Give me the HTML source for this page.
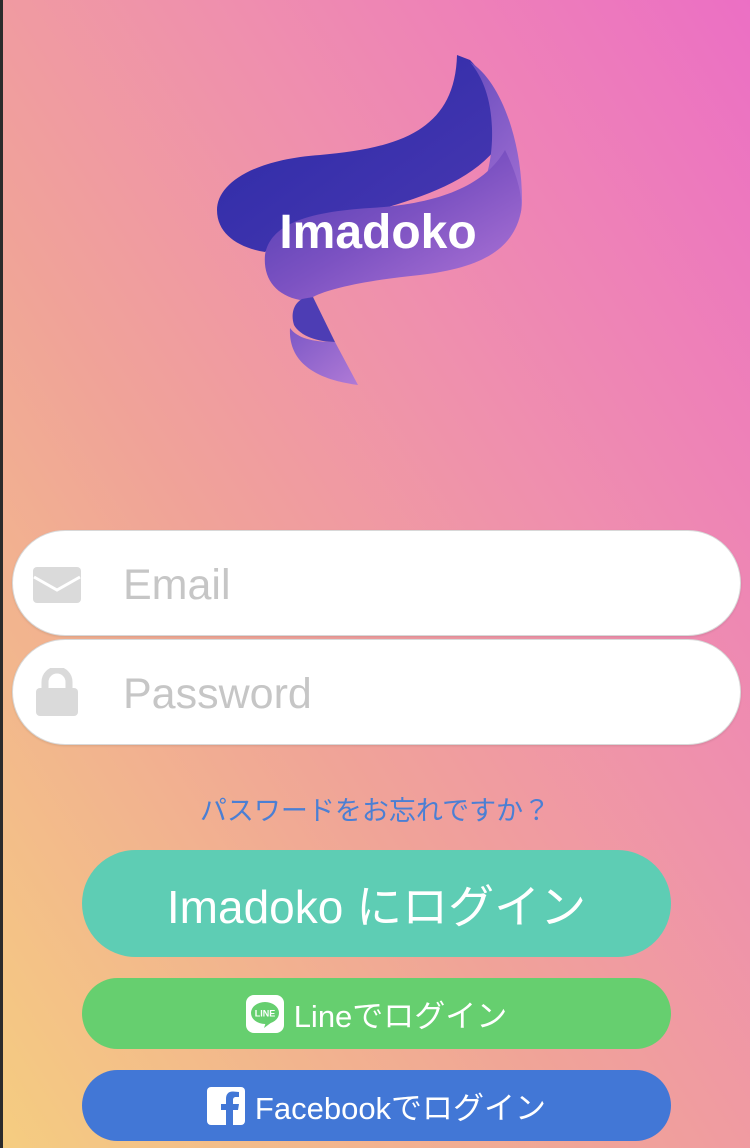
<!DOCTYPE html>
<html><head><meta charset="utf-8"><style>
html,body{margin:0;padding:0}
body{width:750px;height:1148px;overflow:hidden;position:relative;
background:linear-gradient(to top right,#f5cd80 0%,#f0a398 40%,#ef8fae 65%,#ec6fc4 100%);
font-family:"Liberation Sans","Noto Sans CJK JP",sans-serif}
.strip{position:absolute;left:0;top:0;width:3px;height:1148px;background:#2b2b2b}
.field{position:absolute;left:12px;width:727px;height:104px;background:#fff;border:1px solid #d8d8d8;border-radius:53px;box-shadow:0 1px 2px rgba(0,0,0,.1)}
.ph{position:absolute;left:110px;top:0;line-height:108px;font-size:43px;color:#c6c6c6}
.btn{position:absolute;left:82px;width:589px;color:#fff;text-align:center;display:flex;align-items:center;justify-content:center}
</style></head><body>
<div class="strip"></div>
<svg style="position:absolute;left:0;top:0" width="750" height="420">
<defs>
<linearGradient id="g1" x1="0" y1="0" x2="1" y2="1"><stop offset="0" stop-color="#2a2aa6"/><stop offset="1" stop-color="#4a38b2"/></linearGradient>
<linearGradient id="g2" x1="0" y1="0" x2="1" y2="1"><stop offset="0" stop-color="#4a3ab0"/><stop offset=".5" stop-color="#7c52c2"/><stop offset="1" stop-color="#b478d8"/></linearGradient>
<linearGradient id="g4" x1="0" y1="0" x2="1" y2="1"><stop offset="0" stop-color="#7c58c6"/><stop offset="1" stop-color="#b07ad6"/></linearGradient>
<linearGradient id="g5" x1="0" y1="0" x2="0.6" y2="1"><stop offset="0" stop-color="#5a44b8"/><stop offset="1" stop-color="#a470d4"/></linearGradient>
</defs>
<path d="M457 55 C455 130 400 148 320 155 C250 160 217 185 217 210 C217 235 240 248 265 252 C300 215 440 215 495 150 C500 110 490 80 470 60 Z" fill="url(#g1)"/>
<path d="M470 62 C500 80 522 140 522 200 C522 240 490 262 440 268 L420 250 C470 220 490 190 492 140 C493 105 485 80 470 62 Z" fill="url(#g5)"/>
<path d="M265 255 C270 225 305 212 370 208 C440 204 485 185 505 150 C520 180 524 205 520 215 C512 250 480 268 420 275 C370 280 330 288 313 297 L300 300 C275 295 263 278 265 255 Z" fill="url(#g2)"/>
<path d="M302 299 L313 297 L335 342 C318 342 300 336 294 325 C290 312 295 303 302 299 Z" fill="#4d3db4"/>
<path d="M290 328 C288 365 320 380 358 385 L335 342 C312 342 297 338 290 328 Z" fill="url(#g4)"/>
<text x="378" y="248" text-anchor="middle" font-family="Liberation Sans,sans-serif" font-weight="bold" font-size="48" fill="#fff">Imadoko</text>
</svg>
<div class="field" style="top:530px">
<svg style="position:absolute;left:20px;top:36px" width="48" height="36" viewBox="0 0 48 36"><rect width="48" height="36" rx="4" fill="#dadada"/><path d="M1 10 L24 23 L47 10" stroke="#fff" stroke-width="3" fill="none"/></svg>
<div class="ph">Email</div></div>
<div class="field" style="top:639px">
<svg style="position:absolute;left:23px;top:28px" width="42" height="48" viewBox="0 0 42 48"><path d="M9 22 V14 a12 12 0 0 1 24 0 V22" stroke="#dadada" stroke-width="7" fill="none"/><rect y="20" width="42" height="28" rx="4" fill="#dadada"/></svg>
<div class="ph">Password</div></div>
<div style="position:absolute;left:0;width:750px;top:789px;text-align:center;font-size:27px;color:#4b7fd4">パスワードをお忘れですか？</div>
<div class="btn" style="top:850px;height:107px;border-radius:54px;background:#5ecdb4;font-size:46px">Imadoko にログイン</div>
<div class="btn" style="top:978px;height:71px;border-radius:36px;background:#66cf6f;font-size:31px">
<svg width="38" height="38" viewBox="0 0 38 38" style="margin-right:10px"><rect width="38" height="38" rx="8" fill="#fff"/><ellipse cx="19" cy="18" rx="14" ry="11" fill="#66cf6f"/><path d="M20 27 L18 33 L26 27Z" fill="#66cf6f"/><text x="19" y="21.5" text-anchor="middle" font-size="9" font-weight="bold" fill="#fff" font-family="Liberation Sans,sans-serif">LINE</text></svg>Lineでログイン</div>
<div class="btn" style="top:1070px;height:71px;border-radius:36px;background:#4277d6;font-size:31px">
<svg width="38" height="38" viewBox="0 0 38 38" style="margin-right:10px"><rect width="38" height="38" rx="4" fill="#fff"/><path d="M26 38 V23 H31 L32 17 H26 V13 C26 11 27 10 29 10 H32 V5 C30 5 28 4.5 26 4.5 C21 4.5 19 7.5 19 12 V17 H14 V23 H19 V38Z" fill="#4277d6"/></svg>Facebookでログイン</div>
</body></html>
